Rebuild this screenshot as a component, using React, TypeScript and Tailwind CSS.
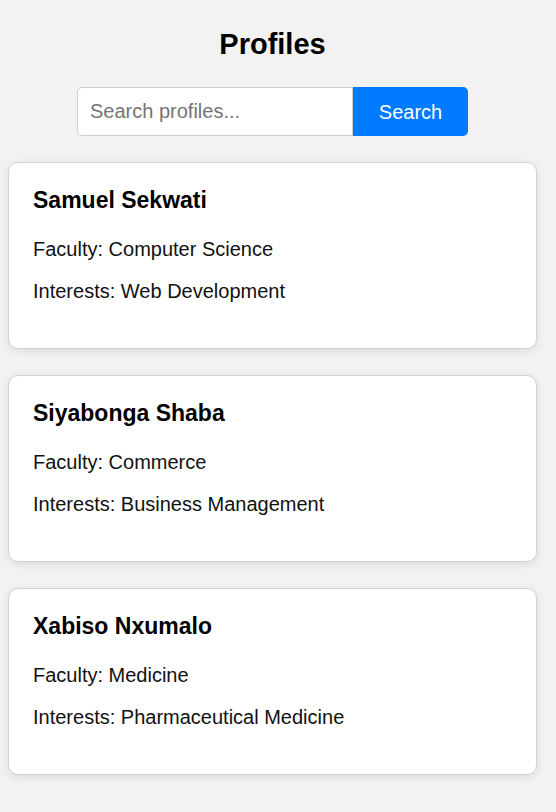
const profiles = [
  { name: "Samuel Sekwati", faculty: "Computer Science", interests: "Web Development" },
  { name: "Siyabonga Shaba", faculty: "Commerce", interests: "Business Management" },
  { name: "Xabiso Nxumalo", faculty: "Medicine", interests: "Pharmaceutical Medicine" },
];

function ProfileCard({ name, faculty, interests }: { name: string; faculty: string; interests: string }) {
  return (
    <div className="bg-white border border-[#d3d3d3] rounded-[10px] shadow-[0_2px_8px_rgba(0,0,0,0.1)] px-6 pt-[26px] pb-[47px]">
      <h3 className="text-[23px] leading-none font-bold text-black">{name}</h3>
      <p className="mt-[27px] text-[20px] leading-none text-[#111]">Faculty: {faculty}</p>
      <p className="mt-[22px] text-[20px] leading-none text-[#111]">Interests: {interests}</p>
    </div>
  );
}

export default function App() {
  return (
    <div className="min-h-screen bg-[#f2f2f2] font-['Liberation_Sans',Arial,sans-serif]">
      <div className="w-[545px] px-2 pb-8">
        <h1 className="pt-[30px] text-center text-[29px] leading-none font-bold text-black">Profiles</h1>

        <div className="mt-[28px] flex justify-center">
          <input
            type="text"
            placeholder="Search profiles..."
            className="w-[276px] h-[49px] px-3 text-[20px] bg-white border border-[#ccc] rounded-l-[5px] outline-none placeholder:text-[#757575]"
          />
          <button className="w-[115px] h-[49px] bg-[#007bff] text-white text-[20px] rounded-r-[5px]">
            Search
          </button>
        </div>

        <div className="mt-[26px] flex flex-col gap-[26px]">
          {profiles.map((p) => (
            <ProfileCard key={p.name} {...p} />
          ))}
        </div>
      </div>
    </div>
  );
}
